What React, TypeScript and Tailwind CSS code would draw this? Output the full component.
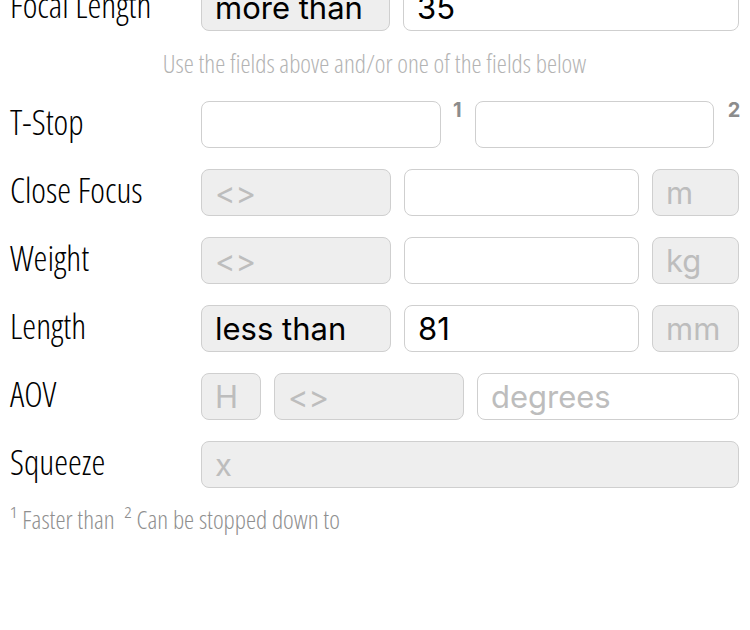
const label = "w-[191px] shrink-0 pb-[6px] font-['Open_Sans'] font-stretch-condensed font-light text-[35px] leading-none text-black";
const box = "h-[47px] rounded-[8px] border border-[#cfcfcf] px-[13px] flex items-center font-['Inter'] text-[31px] leading-none";
const grey = `${box} bg-[#eeeeee]`;
const white = `${box} bg-white`;
const ph = "text-[#bdbdbd]";
const note = "font-['Open_Sans'] font-stretch-condensed font-light text-[25.5px] leading-none";
const sup = "self-start -mt-[6px] font-['Inter'] text-[20px] font-bold text-[#8c8c8c]";

function Row({ name, children }: { name: string; children: React.ReactNode }) {
  return (
    <div className="flex items-center">
      <div className={label}>{name}</div>
      <div className="flex flex-1 items-center gap-[13px]">{children}</div>
    </div>
  );
}

export default function App() {
  return (
    <div className="h-[630px] w-[750px] overflow-hidden bg-white">
      <div className="-mt-[16px] flex flex-col pl-[10px] pr-[11px]">
        <Row name="Focal Length">
          <div className={`${grey} w-[189px] text-black`}>more than</div>
          <div className={`${white} flex-1 text-black`}>35</div>
        </Row>

        <div className={`flex h-[70px] items-center justify-center pb-[4px] text-[#b3b3b3] ${note}`}>
          Use the fields above and/or one of the fields below
        </div>

        <div className="flex flex-col gap-[21px]">
          <Row name="T-Stop">
            <div className={`${white} w-[240px]`} />
            <span className={`-ml-[1px] ${sup}`}>1</span>
            <div className={`${white} w-[239px]`} />
            <span className={`ml-[1px] ${sup}`}>2</span>
          </Row>
          <Row name="Close Focus">
            <div className={`${grey} w-[190px] ${ph}`}>&lt;&gt;</div>
            <div className={`${white} w-[235px]`} />
            <div className={`${grey} flex-1 ${ph}`}>m</div>
          </Row>
          <Row name="Weight">
            <div className={`${grey} w-[190px] ${ph}`}>&lt;&gt;</div>
            <div className={`${white} w-[235px]`} />
            <div className={`${grey} flex-1 ${ph}`}>kg</div>
          </Row>
          <Row name="Length">
            <div className={`${grey} w-[190px] text-black`}>less than</div>
            <div className={`${white} w-[235px] text-black`}>81</div>
            <div className={`${grey} flex-1 ${ph}`}>mm</div>
          </Row>
          <Row name="AOV">
            <div className={`${grey} w-[60px] ${ph}`}>H</div>
            <div className={`${grey} w-[190px] ${ph}`}>&lt;&gt;</div>
            <div className={`${white} flex-1 ${ph}`}>degrees</div>
          </Row>
          <Row name="Squeeze">
            <div className={`${grey} flex-1 ${ph}`}>x</div>
          </Row>
        </div>

        <div className={`mt-[19px] text-[#8f8f8f] ${note}`}>
          ¹ Faster than &nbsp;² Can be stopped down to
        </div>
      </div>
    </div>
  );
}
